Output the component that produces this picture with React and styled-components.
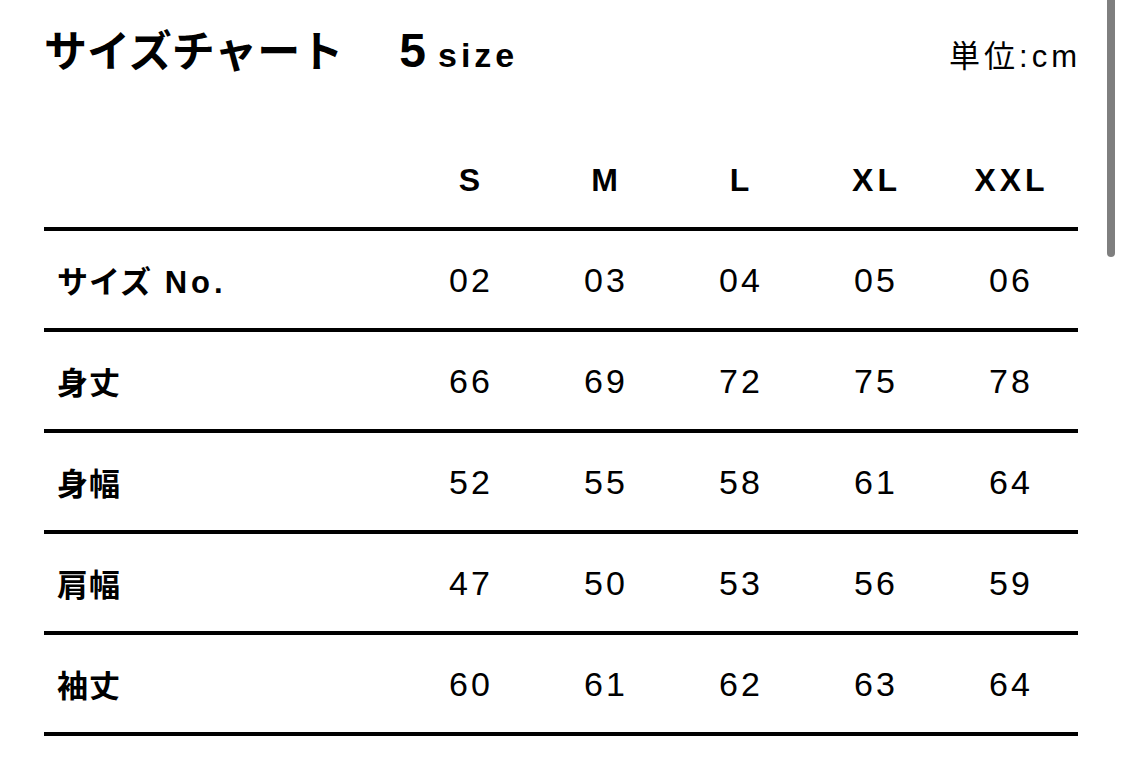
import styled, { createGlobalStyle } from "styled-components";

const Global = createGlobalStyle`
  html, body {
    margin: 0;
    padding: 0;
    background: #fff;
  }
  body {
    font-family: "Liberation Sans", "Noto Sans CJK JP", sans-serif;
    color: #000;
  }
`;

const Page = styled.main`
  position: relative;
  width: 1124px;
  height: 769px;
  overflow: hidden;
  padding-left: 44px;
  box-sizing: border-box;
`;

const Header = styled.header`
  display: flex;
  align-items: baseline;
  justify-content: space-between;
  width: 1034px;
  height: 130px;
  padding-top: 22px;
  box-sizing: border-box;
`;

const Titulo = styled.h1`
  margin: 0;
  font-size: 43px;
  font-weight: 700;
  line-height: 1.2;
  font-family: "Noto Sans CJK JP", sans-serif;
`;

const Conta = styled.span`
  margin-left: ${(p) => p.$gap}px;
  font-family: "Liberation Sans", sans-serif;
  font-size: ${(p) => p.$size}px;
  letter-spacing: ${(p) => p.$spacing || 0}px;
  font-weight: 700;
`;

const Unidade = styled.span`
  font-size: 31px;
  letter-spacing: 4px;
  margin-right: -3px;
  font-family: "Liberation Sans", "Noto Sans CJK JP", sans-serif;
`;

const Tabela = styled.div`
  width: 1034px;
`;

const Linha = styled.div`
  display: grid;
  grid-template-columns: 358px repeat(5, 135px);
  align-items: center;
  height: 97px;
  border-bottom: 4px solid #000;
`;

const Rotulo = styled.div`
  padding-left: 13px;
  font-size: 31px;
  font-weight: 700;
  letter-spacing: 1px;
  font-family: "Liberation Sans", "Noto Sans CJK JP", sans-serif;
`;

const Latino = styled.span`
  letter-spacing: 4px;
`;

const Celula = styled.div`
  text-align: center;
  font-size: ${(p) => (p.$cabecalho ? 32 : 34)}px;
  font-weight: ${(p) => (p.$cabecalho ? 700 : 400)};
  letter-spacing: ${(p) => (p.$cabecalho ? 4 : 3)}px;
  padding-left: ${(p) => (p.$cabecalho ? 4 : 3)}px;
  padding-top: ${(p) => (p.$cabecalho ? 4 : 2)}px;
`;

const Barra = styled.div`
  position: absolute;
  top: -10px;
  left: 1107px;
  width: 8px;
  height: 267px;
  border-radius: 4px;
  background: #7f7f7f;
`;

const tamanhos = ["S", "M", "L", "XL", "XXL"];

const linhas = [
  { nome: "サイズ", extra: " No.", valores: ["02", "03", "04", "05", "06"] },
  { nome: "身丈", valores: ["66", "69", "72", "75", "78"] },
  { nome: "身幅", valores: ["52", "55", "58", "61", "64"] },
  { nome: "肩幅", valores: ["47", "50", "53", "56", "59"] },
  { nome: "袖丈", valores: ["60", "61", "62", "63", "64"] },
];

export default function App() {
  return (
    <Page>
      <Global />
      <Header>
        <Titulo>
          サイズチャート
          <Conta $size={48} $gap={56}>5</Conta>
          <Conta $size={34} $spacing={4} $gap={12}>size</Conta>
        </Titulo>
        <Unidade>単位:cm</Unidade>
      </Header>

      <Tabela>
        <Linha>
          <div />
          {tamanhos.map((t) => (
            <Celula key={t} $cabecalho>{t}</Celula>
          ))}
        </Linha>
        {linhas.map((l) => (
          <Linha key={l.nome}>
            <Rotulo>
              {l.nome}
              {l.extra && <Latino>{l.extra}</Latino>}
            </Rotulo>
            {l.valores.map((v, i) => (
              <Celula key={i}>{v}</Celula>
            ))}
          </Linha>
        ))}
      </Tabela>

      <Barra />
    </Page>
  );
}
